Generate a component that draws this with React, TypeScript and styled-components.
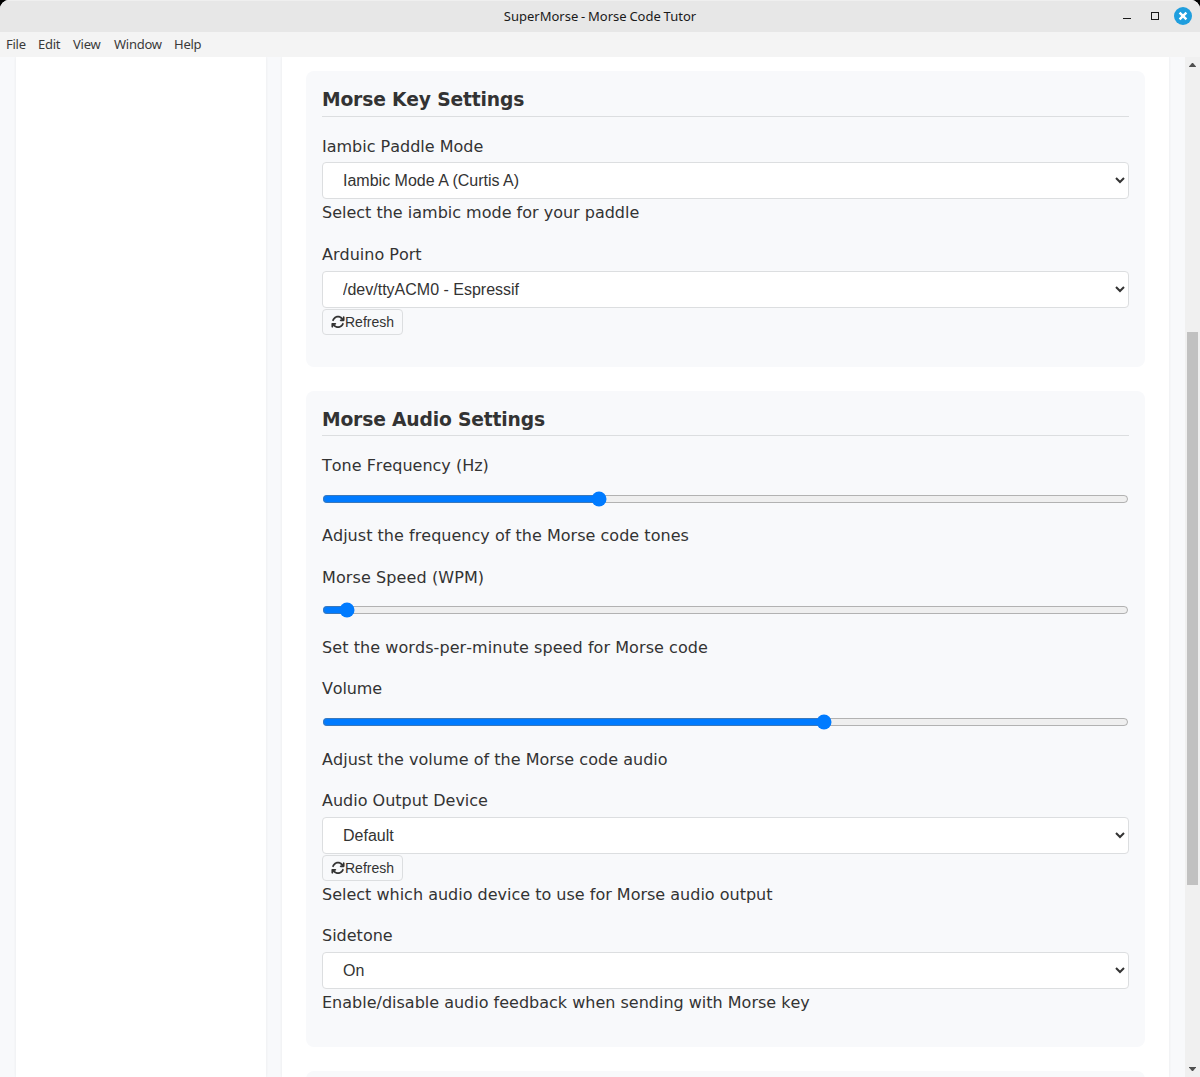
import React from "react";
import styled, { createGlobalStyle } from "styled-components";
import { FaArrowsRotate } from "react-icons/fa6";

const GlobalStyle = createGlobalStyle`
  * { box-sizing: border-box; }
  body {
    margin: 0;
    background: #000;
    color: #333;
    font: 16px "DejaVu Sans", sans-serif;
    font-kerning: none;
    overflow: hidden;
  }
`;

const Window = styled.div`
  display: flex;
  flex-direction: column;
  width: 1200px;
  height: 1077px;
  overflow: hidden;
  border-radius: 9px 9px 0 0;
  background: #f8f9fa;
`;

const TitleBar = styled.header`
  display: grid;
  grid-template-columns: 1fr auto 1fr;
  align-items: center;
  flex: none;
  height: 32px;
  padding-right: 8px;
  background: #e7e7e7;
  box-shadow: inset 0 1px #efefef;
`;

const Title = styled.h1`
  grid-column: 2;
  margin: 0 -8px 0 0;
  font: 13px/32px "Noto Sans", sans-serif;
  word-spacing: -0.6px;
  color: #1a1a1a;
`;

const Controls = styled.div`
  display: flex;
  justify-content: flex-end;
`;

const MenuBar = styled.nav`
  display: flex;
  flex: none;
  gap: 12px;
  height: 25px;
  padding-left: 6px;
  background: #f4f4f4;
  font: 13px/25px "Noto Sans", sans-serif;
  letter-spacing: -0.25px;
  color: #3a3a3a;
`;

const MenuItem = styled.span<{ $width: number }>`
  width: ${(p) => p.$width}px;
  white-space: nowrap;
`;

const Viewport = styled.div`
  display: flex;
  flex: 1;
  min-height: 0;
  overflow: hidden;
  background: #f8f9fb;
`;

const Layout = styled.div`
  display: flex;
  flex: 1;
  gap: 16px;
  padding: 0 16px;
`;

const Sidebar = styled.aside`
  width: 250px;
  background: #fff;
  box-shadow: 0 0 3px rgba(0, 0, 0, 0.07);
`;

const Main = styled.main`
  display: flex;
  flex: 1;
  flex-direction: column;
  gap: 24px;
  padding: 14.3px 24px 0;
  background: #fff;
  box-shadow: 0 0 3px rgba(0, 0, 0, 0.07);
`;

const Card = styled.section<{ $height: number }>`
  flex: none;
  height: ${(p) => p.$height}px;
  padding: 16px;
  border-radius: 8px;
  background: #f8f9fb;
`;

const Heading = styled.h3`
  margin: 0 0 16.4px;
  padding: 1px 0 3.9px;
  border-bottom: 1px solid #dcdee0;
  font-size: 18.72px;
  line-height: 24px;
  font-weight: 700;
  letter-spacing: -0.17px;
`;

const Group = styled.div<{ $gap: number }>`
  display: flex;
  flex-direction: column;
  align-items: flex-start;
  margin-bottom: ${(p) => p.$gap}px;
`;

const Label = styled.label<{ $tracking?: number }>`
  margin-bottom: 2.7px;
  line-height: 26px;
  letter-spacing: ${(p) => p.$tracking ?? 0}px;
`;

const Help = styled.p<{ $tracking?: number }>`
  margin: 1.1px 0 0;
  line-height: 26px;
  letter-spacing: ${(p) => p.$tracking ?? 0}px;
`;

const Select = styled.select`
  width: 100%;
  height: 37px;
  padding: 8px 16px;
  border: 1px solid #dcdee0;
  border-radius: 4px;
  background: #fff;
  color: #333;
  font: 16px "Liberation Sans", Arial, sans-serif;
`;

const Slider = styled.input`
  width: 100%;
  height: 16px;
  margin: 9px 0 15.55px;
  accent-color: #007bff;
`;

const RefreshButton = styled.button`
  display: flex;
  align-items: center;
  height: 26px;
  margin-top: 1px;
  padding: 0 8px;
  border: 1px solid #dcdee0;
  border-radius: 4px;
  background: #f8f9fb;
  color: #333;
  font: 14px "Liberation Sans", Arial, sans-serif;
`;

const ScrollBar = styled.div`
  display: flex;
  flex-direction: column;
  align-items: center;
  width: 15px;
  background: #f0f0f0;
`;

const ScrollThumb = styled.div`
  width: 11px;
  height: 553px;
  margin: 260px 0 auto;
  background: #c1c1c1;
`;

const Arrow = styled.svg`
  flex: none;
  display: block;
  width: 15px;
  height: 15px;
  fill: #505050;
`;

function SelectGroup({ label, value, help, refresh, gap = 15.5 }: {
  label: string; value: string; help?: string; refresh?: boolean; gap?: number;
}) {
  return (
    <Group $gap={gap}>
      <Label>{label}</Label>
      <Select defaultValue={value} aria-label={label}>
        <option>{value}</option>
      </Select>
      {refresh && <RefreshButton><FaArrowsRotate size={14} />Refresh</RefreshButton>}
      {help && <Help>{help}</Help>}
    </Group>
  );
}

function SliderGroup({ label, value, help, labelTracking, helpTracking }: {
  label: string; value: number; help: string; labelTracking?: number; helpTracking?: number;
}) {
  return (
    <Group $gap={15.45}>
      <Label $tracking={labelTracking}>{label}</Label>
      <Slider type="range" min={0} max={1000} defaultValue={value} aria-label={label} />
      <Help $tracking={helpTracking}>{help}</Help>
    </Group>
  );
}

const menu: [string, number][] = [["File", 20], ["Edit", 23], ["View", 29], ["Window", 48], ["Help", 27]];

export default function App() {
  return (
    <>
      <GlobalStyle />
      <Window>
        <TitleBar>
          <Title>SuperMorse - Morse Code Tutor</Title>
          <Controls>
            <svg width="74" height="32" viewBox="0 0 74 32">
              <path d="M5 18.5h8" stroke="#1a1a1a" />
              <rect x="33.5" y="12.5" width="7" height="7" fill="none" stroke="#1a1a1a" />
              <circle cx="65" cy="16" r="9" fill="#1f9ede" />
              <path d="M61.6 12.6l6.8 6.8m0-6.8l-6.8 6.8" stroke="#fff" strokeWidth="2.4" />
            </svg>
          </Controls>
        </TitleBar>
        <MenuBar>
          {menu.map(([name, width]) => <MenuItem key={name} $width={width}>{name}</MenuItem>)}
        </MenuBar>
        <Viewport>
          <Layout>
            <Sidebar />
            <Main>
              <Card $height={295.25}>
                <Heading>Morse Key Settings</Heading>
                <SelectGroup label="Iambic Paddle Mode" value="Iambic Mode A (Curtis A)" help="Select the iambic mode for your paddle" />
                <SelectGroup label="Arduino Port" value="/dev/ttyACM0 - Espressif" refresh />
              </Card>
              <Card $height={656}>
                <Heading>Morse Audio Settings</Heading>
                <SliderGroup label="Tone Frequency (Hz)" value={340} help="Adjust the frequency of the Morse code tones" helpTracking={0.025} />
                <SliderGroup label="Morse Speed (WPM)" value={22} help="Set the words-per-minute speed for Morse code" labelTracking={0.1} helpTracking={0.07} />
                <SliderGroup label="Volume" value={625} help="Adjust the volume of the Morse code audio" labelTracking={-0.15} helpTracking={0.03} />
                <SelectGroup label="Audio Output Device" value="Default" refresh gap={15.1} help="Select which audio device to use for Morse audio output" />
                <SelectGroup label="Sidetone" value="On" help="Enable/disable audio feedback when sending with Morse key" />
              </Card>
              <Card $height={40} />
            </Main>
          </Layout>
          <ScrollBar>
            <Arrow viewBox="0 0 15 15"><path d="M4 10V9.5L7 6h1l3 3.5v.5z" /></Arrow>
            <ScrollThumb />
            <Arrow viewBox="0 0 15 15"><path d="M4 5v.5L7 9h1l3-3.5V5z" /></Arrow>
          </ScrollBar>
        </Viewport>
      </Window>
    </>
  );
}
